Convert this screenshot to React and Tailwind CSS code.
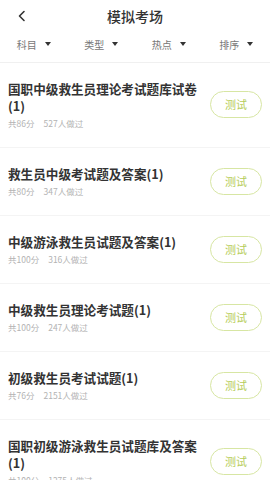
import React from "react";

const filters = ["科目", "类型", "热点", "排序"];

const exams = [
  { title: "国职中级救生员理论考试题库试卷(1)", score: 86, count: 527 },
  { title: "救生员中级考试题及答案(1)", score: 80, count: 347 },
  { title: "中级游泳救生员试题及答案(1)", score: 100, count: 316 },
  { title: "中级救生员理论考试题(1)", score: 100, count: 247 },
  { title: "初级救生员考试试题(1)", score: 76, count: 2151 },
  { title: "国职初级游泳救生员试题库及答案(1)", score: 100, count: 1275 },
];

const ExamRow = ({ exam }) => {
  return (
    <div className="flex items-center border-b border-[#f4f4f4] px-2 pt-[17px] pb-[18px]">
      <div className="w-[198px]">
        <div className="text-[12.6px] font-semibold leading-[17px] text-[#333333]">
          {exam.title}
        </div>
        <div className="mt-[3px] flex gap-[9px] text-[8.5px] leading-[12px] text-[#b3b3b3]">
          <span>共{exam.score}分</span>
          <span>{exam.count}人做过</span>
        </div>
      </div>
      <div className="ml-auto flex h-[27px] w-[52px] items-center justify-center rounded-full border border-[#d7e6a3] text-[11px] text-[#b6cd5a]">
        测试
      </div>
    </div>
  );
};

export default function App() {
  return (
    <div
      className="h-[480px] w-[270px] overflow-hidden bg-white"
      style={{ fontFamily: '"Noto Sans CJK SC", "Noto Sans", sans-serif' }}
    >
      <div className="relative flex h-[32px] items-center justify-center">
        <svg
          className="absolute left-[17px] top-[10px]"
          width="10"
          height="12"
          viewBox="0 0 10 12"
          fill="none"
        >
          <path d="M7 1.5L2.5 6L7 10.5" stroke="#333" strokeWidth="1.6" strokeLinecap="round" strokeLinejoin="round" />
        </svg>
        <span className="text-[14px] font-medium text-[#333333]">模拟考场</span>
      </div>
      <div className="grid h-[24px] grid-cols-4 items-center">
        {filters.map((f) => (
          <div key={f} className="flex items-center justify-center gap-[8px]">
            <span className="text-[10px] text-[#777777]">{f}</span>
            <svg width="6" height="4" viewBox="0 0 6 4">
              <path d="M0 0H6L3 4Z" fill="#333" />
            </svg>
          </div>
        ))}
      </div>
      <div className="h-[7px] border-b border-[#f0f0f0]" />
      {exams.map((e) => (
        <ExamRow key={e.title} exam={e} />
      ))}
    </div>
  );
}
